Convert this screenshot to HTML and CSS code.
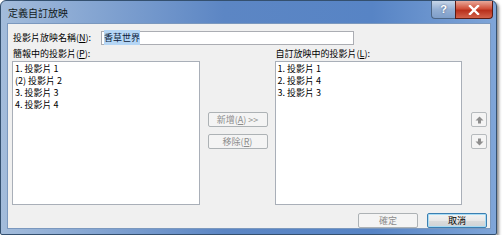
FILE: index.html
```html
<!DOCTYPE html>
<html lang="zh-TW">
<head>
    <meta charset="UTF-8">
    <title>定義自訂放映</title>
    <link rel="stylesheet" href="styles.css">
</head>
<body>
    <div class="window">
        <div class="titlebar">
            <span class="title">定義自訂放映</span>
            <div class="caption-btns">
                <span class="help-btn">?</span>
                <span class="close-btn">
                    <svg width="12" height="10" viewBox="0 0 12 10"><path d="M2 1 L10 9 M10 1 L2 9" stroke="#fff" stroke-width="2.4" stroke-linecap="square"/></svg>
                </span>
            </div>
        </div>
        <div class="dialog">
            <div class="name-row">
                <label class="name-label">投影片放映名稱(<u>N</u>):</label>
                <div class="name-input"><span class="sel">香草世界</span></div>
            </div>
            <div class="lists">
                <div class="list-col">
                    <div class="list-label">簡報中的投影片(<u>P</u>):</div>
                    <ul class="listbox">
                        <li>1. 投影片 1</li>
                        <li>(2) 投影片 2</li>
                        <li>3. 投影片 3</li>
                        <li>4. 投影片 4</li>
                    </ul>
                </div>
                <div class="mid-btns">
                    <button class="btn" disabled>新增(<u>A</u>) &gt;&gt;</button>
                    <button class="btn" disabled>移除(<u>R</u>)</button>
                </div>
                <div class="list-col">
                    <div class="list-label">自訂放映中的投影片(<u>L</u>):</div>
                    <ul class="listbox">
                        <li>1. 投影片 1</li>
                        <li>2. 投影片 4</li>
                        <li>3. 投影片 3</li>
                    </ul>
                </div>
                <div class="order-btns">
                    <button class="arrow-btn">
                        <svg width="9" height="8" viewBox="0 0 9 8"><path d="M4.5 0.5 L8.5 4.5 L6 4.5 L6 7.5 L3 7.5 L3 4.5 L0.5 4.5 Z" fill="#8e8e8e"/></svg>
                    </button>
                    <button class="arrow-btn">
                        <svg width="9" height="8" viewBox="0 0 9 8"><path d="M4.5 7.5 L8.5 3.5 L6 3.5 L6 0.5 L3 0.5 L3 3.5 L0.5 3.5 Z" fill="#8e8e8e"/></svg>
                    </button>
                </div>
            </div>
            <div class="footer">
                <button class="btn" disabled>確定</button>
                <button class="btn default-btn">取消</button>
            </div>
        </div>
    </div>
</body>
</html>
```

FILE: styles.css
```css
body {
    margin: 0;
    background-color: #ffffff;
    font-family: "Noto Sans CJK TC", "Liberation Sans", sans-serif;
    font-size: 9px;
    color: #000000;
}
.window {
    width: 495px;
    height: 233px;
    border: 1px solid #34506f;
    border-radius: 6px 6px 2px 2px;
    background: linear-gradient(to right, #a3bcdb 0%, #86a6d2 18%, #5c86c4 45%, #5784c5 75%, #7fa5d8 100%);
    box-shadow: 2px 2px 3px rgba(0, 0, 0, 0.45);
    display: flex;
    flex-direction: column;
}
.titlebar {
    height: 22px;
    display: flex;
    justify-content: space-between;
    align-items: flex-start;
    padding-left: 7px;
}
.title {
    font-size: 10px;
    line-height: 24px;
    color: #101820;
}
.caption-btns {
    display: flex;
    margin-right: 3px;
}
.help-btn {
    width: 23px;
    height: 17px;
    border: 1px solid #4d6685;
    border-top: none;
    border-right: none;
    border-radius: 0 0 0 4px;
    background: linear-gradient(to bottom, #c7d6e8, #94afd3 50%, #7f9ec9);
    color: #ffffff;
    font-family: "Liberation Sans", sans-serif;
    font-weight: bold;
    font-size: 11px;
    line-height: 17px;
    text-align: center;
    text-shadow: 0 0 2px #40557a;
}
.close-btn {
    width: 36px;
    height: 17px;
    border: 1px solid #5a1b14;
    border-top: none;
    border-radius: 0 0 4px 0;
    background: linear-gradient(to bottom, #e9a99a, #d0503a 45%, #b8301c 55%, #d2624b);
    display: flex;
    align-items: center;
    justify-content: center;
}
.dialog {
    flex: 1;
    margin: 0 5px 5px 6px;
    border: 1px solid #7b98be;
    background-color: #f0f0f0;
    padding: 7px 3px 0 4px;
}
.name-row {
    display: flex;
    align-items: center;
    height: 14px;
}
.name-label {
    width: 88px;
    padding-left: 1px;
    line-height: 14px;
}
.name-input {
    width: 249px;
    height: 12px;
    border: 1px solid #abadb3;
    background-color: #ffffff;
    padding-left: 2px;
    line-height: 12px;
}
.sel {
    background-color: #b5d6f5;
    color: #0b1a3a;
    padding: 1px 0;
}
.lists {
    display: flex;
    margin-top: 1px;
}
.list-col {
    width: 188px;
    display: flex;
    flex-direction: column;
}
.list-label {
    height: 15px;
    line-height: 15px;
    padding-left: 1px;
}
.listbox {
    list-style: none;
    margin: 0;
    padding: 1px 2px;
    height: 140px;
    border: 1px solid #a9afb8;
    background-color: #ffffff;
}
.listbox li {
    line-height: 12px;
    height: 12px;
}
.mid-btns {
    width: 60px;
    margin: 0 7px 0 8px;
    padding-top: 66px;
    display: flex;
    flex-direction: column;
    gap: 7px;
}
.btn {
    font-family: inherit;
    font-size: 9px;
    width: 60px;
    height: 15px;
    padding: 0;
    line-height: 13px;
    border: 1px solid #adb2b5;
    border-radius: 2px;
    background-color: #f4f4f4;
    color: #8d8d8d;
}
.order-btns {
    margin-left: 9px;
    padding-top: 66px;
    display: flex;
    flex-direction: column;
    gap: 7px;
}
.arrow-btn {
    width: 16px;
    height: 15px;
    padding: 0;
    border: 1px solid #b6babd;
    border-radius: 2px;
    background-color: #f4f4f4;
    display: flex;
    align-items: center;
    justify-content: center;
}
.footer {
    display: flex;
    justify-content: flex-end;
    gap: 9px;
    margin-top: 8px;
}
.default-btn {
    color: #000000;
    border: 1px solid #3c7fb1;
    background: linear-gradient(to bottom, #f3f3f3, #e8e8e8 50%, #dcdcdc 51%, #cfd3d6);
    box-shadow: inset 0 0 0 1px #a8dcf5;
}
```
